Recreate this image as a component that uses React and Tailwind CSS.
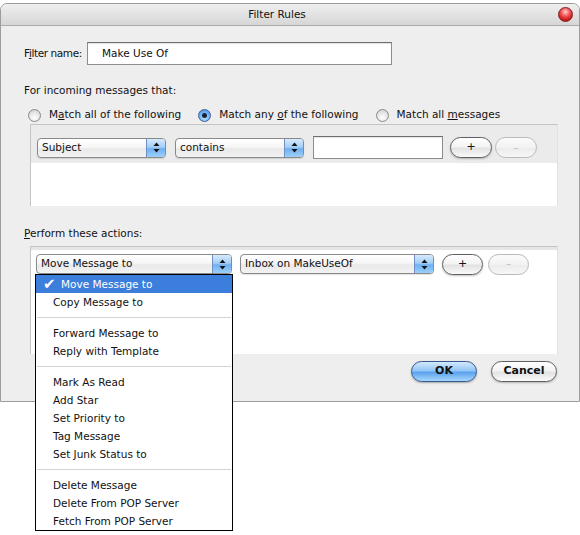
import React from 'react';

const Arrows = () => (
  <svg width="7" height="11" viewBox="0 0 7 11">
    <path d="M3.5 0.5 L6.5 4 L0.5 4 Z" fill="#111" />
    <path d="M0.5 7 L6.5 7 L3.5 10.5 Z" fill="#111" />
  </svg>
);

const PopUp = ({ label, className = '' }) => (
  <div className={`flex h-[20px] rounded-[4px] border border-[#8a8a8a] overflow-hidden shadow-[0_1px_1px_rgba(0,0,0,0.12)] bg-[linear-gradient(to_bottom,#ffffff_0%,#f6f6f6_45%,#e9e9e9_55%,#f3f3f3_100%)] ${className}`}>
    <div className="flex-1 flex items-center pl-[4px] text-[#111] whitespace-nowrap">{label}</div>
    <div className="w-[19px] flex items-center justify-center border-l border-[#6f8fc4] bg-[linear-gradient(to_bottom,#d6eafd_0%,#a5cff8_45%,#6fb0f2_55%,#9dd0fb_100%)]">
      <Arrows />
    </div>
  </div>
);

const Pill = ({ children, disabled, blue, className = '' }) => {
  let look = 'border-[#5f5f5f] bg-[linear-gradient(to_bottom,#ffffff_0%,#f3f3f3_45%,#e3e3e3_55%,#fafafa_100%)] text-[#111] shadow-[0_1px_2px_rgba(0,0,0,0.25)]';
  if (disabled) look = 'border-[#b9b9b9] bg-[linear-gradient(to_bottom,#fbfbfb_0%,#f2f2f2_50%,#ececec_55%,#f7f7f7_100%)] text-[#bdbdbd]';
  if (blue) look = 'border-[#35578f] bg-[linear-gradient(to_bottom,#d4e9fd_0%,#93c6f6_45%,#5ba2ee_55%,#a8d7fc_100%)] text-[#111] shadow-[0_1px_2px_rgba(0,0,0,0.3)]';
  return (
    <div className={`flex items-center justify-center rounded-full border ${look} ${className}`}>
      {children}
    </div>
  );
};

const Radio = ({ on, children }) => (
  <div className="flex items-center gap-[8px]">
    {on ? (
      <div className="w-[13px] h-[13px] rounded-full border border-[#3d5f93] flex items-center justify-center bg-[radial-gradient(circle_at_50%_70%,#bfe2ff_0%,#6cb1f3_55%,#3f86dc_100%)]">
        <div className="w-[5px] h-[5px] rounded-full bg-[#16243a]" />
      </div>
    ) : (
      <div className="w-[13px] h-[13px] rounded-full border border-[#8a8a8a] bg-[radial-gradient(circle_at_50%_70%,#ffffff_0%,#e2e2e2_60%,#c4c4c4_100%)]" />
    )}
    <span className="whitespace-nowrap">{children}</span>
  </div>
);

const MenuItem = ({ children }) => (
  <div className="h-[18px] flex items-center pt-px pl-[17px] whitespace-nowrap">{children}</div>
);

const Sep = () => (
  <div className="h-[13px] flex items-center px-[1px]">
    <div className="h-px w-full bg-[#d3d3d3]" />
  </div>
);

export default function App() {
  return (
    <div className="relative w-[580px] h-[535px] bg-white pt-[3px] font-['DejaVu_Sans',sans-serif] text-[10.5px] text-[#111] overflow-hidden">
      {/* Dialog window */}
      <div className="h-[399px] rounded-t-[7px] border border-[#9c9c9c] bg-[#eeeeee] overflow-hidden">
        <div className="h-[22px] flex items-center border-b border-[#ababab] bg-[linear-gradient(to_bottom,#efefef,#d6d6d6)]">
          <div className="flex-1" />
          <span className="mr-[20px]">Filter Rules</span>
          <div className="flex-1 flex justify-end pr-[6px]">
            <div className="w-[15px] h-[15px] rounded-full border border-[#7e1c1c] bg-[radial-gradient(circle_at_50%_30%,#ffd0d0_0%,#f25353_40%,#c21616_75%,#e05050_100%)]" />
          </div>
        </div>

        <div className="pl-[23px] pr-[21px]">
          <div className="mt-[16px] flex items-center">
            <span className="w-[63px] whitespace-nowrap tracking-[-0.4px]">F<span className="underline">i</span>lter name:</span>
            <div className="w-[305px] h-[23px] border border-[#8d8d8d] border-t-[#6d6d6d] bg-white flex items-center pl-[14px] shadow-[inset_0_1px_1px_rgba(0,0,0,0.12)]">
              Make Use Of
            </div>
          </div>

          <div className="mt-[19px] h-[14px] flex items-center">For incoming messages that:</div>

          <div className="mt-[10px] h-[14px] flex items-center gap-[17px] pl-[4px]">
            <Radio>M<span className="underline">a</span>tch all of the following</Radio>
            <Radio on>Match any <span className="underline">o</span>f the following</Radio>
            <Radio>Match all <span className="underline">m</span>essages</Radio>
          </div>

          {/* Criteria box */}
          <div className="mt-[2px] ml-[6px] h-[82px] border-l border-t border-r border-[#c4c4c4] border-r-[#e2e2e2] bg-white">
            <div className="h-[38px] bg-[#ebebeb] pt-[11px] pl-[6px] flex items-start">
              <div className="h-[23px] flex items-center">
                <PopUp label="Subject" className="w-[129px]" />
                <PopUp label="contains" className="w-[129px] ml-[9px]" />
                <div className="w-[130px] h-[23px] ml-[9px] border border-[#8d8d8d] border-t-[#6d6d6d] bg-white shadow-[inset_0_1px_1px_rgba(0,0,0,0.1)]" />
                <Pill className="w-[42px] h-[21px] ml-[7px] text-[11px]">+</Pill>
                <Pill disabled className="w-[42px] h-[21px] ml-[3px]">–</Pill>
              </div>
            </div>
          </div>

          <div className="mt-[21px] h-[14px] flex items-center">
            <span><span className="underline">P</span>erform these actions:</span>
          </div>

          {/* Actions box */}
          <div className="mt-[5px] ml-[6px] h-[108px] border-l border-t border-r border-[#c4c4c4] border-r-[#e2e2e2] bg-white">
            <div className="h-[3px] bg-[#e6e6e6]" />
            <div className="h-[22px] mt-[3px] pl-[5px] flex items-center">
              <PopUp label="Move Message to" className="w-[196px]" />
              <PopUp label="Inbox on MakeUseOf" className="w-[194px] ml-[8px]" />
              <Pill className="w-[41px] h-[21px] ml-[8px] text-[11px]">+</Pill>
              <Pill disabled className="w-[41px] h-[21px] ml-[5px]">–</Pill>
            </div>
          </div>

          <div className="mt-[7px] flex justify-end gap-[14px] pr-[1px]">
            <Pill blue className="w-[66px] h-[21px] font-bold text-[11px]">OK</Pill>
            <Pill className="w-[66px] h-[21px] font-bold text-[11px]">Cancel</Pill>
          </div>
        </div>
      </div>

      {/* Open pop-up menu */}
      <div className="absolute left-[35px] top-[274px] w-[198px] border border-black bg-white">
        <div className="h-[18px] flex items-center pt-px bg-[#3c7edc] text-white pl-[7px] whitespace-nowrap">
          <span className="w-[18px] text-[15px] leading-none">✔</span>
          <span>Move Message to</span>
        </div>
        <MenuItem>Copy Message to</MenuItem>
        <Sep />
        <MenuItem>Forward Message to</MenuItem>
        <MenuItem>Reply with Template</MenuItem>
        <Sep />
        <MenuItem>Mark As Read</MenuItem>
        <MenuItem>Add Star</MenuItem>
        <MenuItem>Set Priority to</MenuItem>
        <MenuItem>Tag Message</MenuItem>
        <MenuItem>Set Junk Status to</MenuItem>
        <Sep />
        <MenuItem>Delete Message</MenuItem>
        <MenuItem>Delete From POP Server</MenuItem>
        <MenuItem>Fetch From POP Server</MenuItem>
      </div>
    </div>
  );
}
